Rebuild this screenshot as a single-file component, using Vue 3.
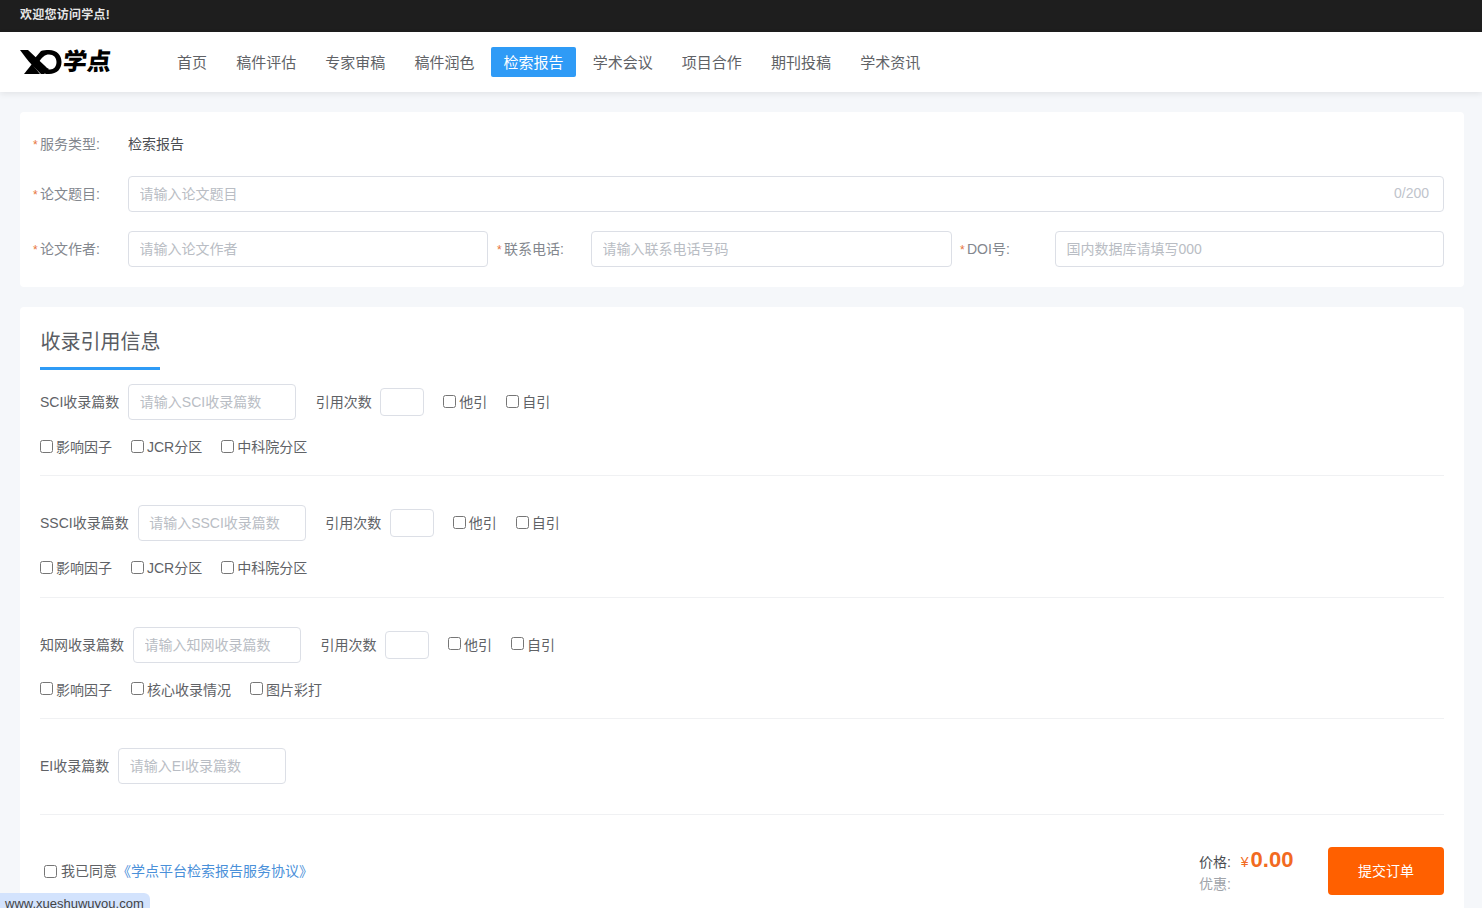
<script setup>
const navItems = ['首页', '稿件评估', '专家审稿', '稿件润色', '检索报告', '学术会议', '项目合作', '期刊投稿', '学术资讯']

const sections = [
  { name: 'SCI', cite: true, checks: ['影响因子', 'JCR分区', '中科院分区'] },
  { name: 'SSCI', cite: true, checks: ['影响因子', 'JCR分区', '中科院分区'] },
  { name: '知网', cite: true, checks: ['影响因子', '核心收录情况', '图片彩打'] },
  { name: 'EI', cite: false, checks: [] }
]
</script>

<template>
  <div class="page">
    <div class="topbar">欢迎您访问学点!</div>

    <header class="nav">
      <div class="logo">
        <svg class="logo-mark" viewBox="0 0 42 24" width="42" height="24">
          <path d="M0 0H8L24 15C26 17 27 18 29 19L24 24H21L12 15C8 11 4 5 0 0Z" fill="#000" />
          <path d="M4 24L12 14L20 24Z" fill="#000" />
          <path d="M15 8L21 1C23 0 26 0 29 0C37 0 41.500 5 41.500 12C41.500 19 37 24 29 24C27 24 25 24 24 23L27 19C28 19.500 29 19.500 30 19.500C34 19.500 36.500 16.500 36.500 12C36.500 7.500 33.500 4.500 29 4.500C25 4.500 22 7 19 12Z" fill="#000" />
        </svg>
        <span class="logo-text">学点</span>
      </div>
      <nav class="menu">
        <a v-for="item in navItems" :key="item" class="menu-item" :class="{ active: item === '检索报告' }">{{ item }}</a>
      </nav>
    </header>

    <main class="content">
      <section class="card base-card">
        <div class="form-row">
          <label class="field-label"><i>*</i>服务类型:</label>
          <span class="service">检索报告</span>
        </div>
        <div class="form-row title-row">
          <label class="field-label"><i>*</i>论文题目:</label>
          <div class="title-input">
            <input class="input" placeholder="请输入论文题目" />
            <span class="count">0/200</span>
          </div>
        </div>
        <div class="form-row triple">
          <div class="field">
            <label class="field-label"><i>*</i>论文作者:</label>
            <input class="input" placeholder="请输入论文作者" />
          </div>
          <div class="field">
            <label class="field-label"><i>*</i>联系电话:</label>
            <input class="input" placeholder="请输入联系电话号码" />
          </div>
          <div class="field">
            <label class="field-label"><i>*</i>DOI号:</label>
            <input class="input" placeholder="国内数据库请填写000" />
          </div>
        </div>
      </section>

      <section class="card cite-card">
        <h2 class="cite-title">收录引用信息</h2>

        <div v-for="s in sections" :key="s.name" class="cite-block" :class="{ short: !s.cite }">
          <div class="cite-row">
            <span class="cite-label">{{ s.name }}收录篇数</span>
            <input class="input count-input" :placeholder="`请输入${s.name}收录篇数`" />
            <template v-if="s.cite">
              <span class="cite-times">引用次数</span>
              <input class="input times-input" />
              <label class="check first-check"><input type="checkbox" />他引</label>
              <label class="check"><input type="checkbox" />自引</label>
            </template>
          </div>
          <div v-if="s.checks.length" class="check-row">
            <label v-for="c in s.checks" :key="c" class="check"><input type="checkbox" />{{ c }}</label>
          </div>
        </div>

        <div class="footer">
          <label class="agree">
            <input type="checkbox" /><span class="agree-text">我已同意<a class="agree-link">《学点平台检索报告服务协议》</a></span>
          </label>
          <div class="price">
            <div class="price-line">价格: <span class="yen">¥</span><b>0.00</b></div>
            <div class="discount">优惠:</div>
          </div>
          <button class="submit">提交订单</button>
        </div>
      </section>
    </main>

    <div class="status">www.xueshuwuyou.com</div>
  </div>
</template>

<style>
html, body {
  margin: 0;
  overflow: hidden;
}
</style>

<style scoped>
.page {
  height: 908px;
  overflow: hidden;
  position: relative;
  background: #f5f7fa;
  font-family: "Liberation Sans", "Noto Sans CJK SC", sans-serif;
  font-size: 14px;
  color: #606266;
}

.topbar {
  height: 32px;
  line-height: 30px;
  padding-left: 20px;
  background: #1e1e1e;
  color: #e6e6e6;
  font-size: 12px;
  font-weight: 700;
  letter-spacing: 0.25px;
}

.nav {
  height: 60px;
  display: flex;
  align-items: center;
  padding-left: 20px;
  background: #fff;
  box-shadow: 0 2px 6px rgba(0, 0, 0, 0.08);
  position: relative;
}

.logo {
  width: 144.500px;
  flex: none;
  display: flex;
  align-items: center;
}

.logo-mark {
  flex: none;
}

.logo-text {
  margin-left: 1px;
  font-size: 24px;
  font-weight: 900;
  line-height: 30px;
  color: #000;
  transform: skewX(-6deg);
}

.menu {
  display: flex;
  gap: 4.125px;
}

.menu-item {
  height: 30px;
  line-height: 32px;
  padding: 0 12.500px;
  border-radius: 2px;
  color: #606266;
  font-size: 15px;
  white-space: nowrap;
}

.menu-item.active {
  background: #2f9bf6;
  color: #fff;
}

.content {
  padding: 20px 18px 20px 20px;
  display: flex;
  flex-direction: column;
  gap: 20px;
}

.card {
  background: #fff;
  border-radius: 4px;
}

.base-card {
  height: 175px;
  box-sizing: border-box;
  padding: 14px 20px 20px 12px;
}

.form-row {
  display: flex;
  align-items: center;
  height: 36px;
}

.title-row {
  margin-top: 14px;
}

.triple {
  margin-top: 19px;
  display: grid;
  grid-template-columns: 457px 456px 1fr;
  column-gap: 7px;
}

.field {
  display: flex;
  align-items: center;
}

.field:first-child {
  padding-right: 1px;
}

.field:nth-child(2) .field-label {
  width: 95px;
}

.field-label {
  flex: none;
  width: 96px;
  padding-bottom: 2px;
  color: #83878e;
  white-space: nowrap;
}

.field-label i {
  display: inline-block;
  width: 7px;
  margin-left: 1px;
  color: #e8743b;
  font-style: normal;
  font-size: 12px;
}

.service {
  padding-bottom: 2px;
  color: #4a4d52;
}

.title-input {
  flex: 1;
  position: relative;
  display: flex;
}

.count {
  position: absolute;
  right: 15px;
  top: 9px;
  color: #c0c4cc;
}

.input {
  display: block;
  width: 100%;
  height: 36px;
  box-sizing: border-box;
  padding: 0 10.500px;
  border: 1px solid #dcdfe6;
  border-radius: 4px;
  outline: none;
  background: #fff;
  font: inherit;
  color: #606266;
}

.input::placeholder {
  color: #b9bdc4;
}

.cite-card {
  height: 640px;
  box-sizing: border-box;
  padding: 0 20px;
}

.cite-title {
  width: 120px;
  height: 63px;
  margin: 0 0 14px;
  box-sizing: border-box;
  padding: 21px 0 0 0.500px;
  border-bottom: 3px solid #2f9bf6;
  font-size: 20px;
  font-weight: 400;
  line-height: 28px;
  color: #5a5d63;
  white-space: nowrap;
}

.cite-block {
  height: 92.400px;
  box-sizing: border-box;
  margin-bottom: 29px;
  border-bottom: 1px solid #f0f1f3;
}

.cite-block.short {
  height: 67px;
  margin-bottom: 32px;
}

.cite-row {
  display: flex;
  align-items: center;
  height: 36px;
}

.cite-label {
  margin-right: 9px;
  padding-bottom: 2px;
  white-space: nowrap;
}

.count-input {
  flex: none;
  width: 168px;
}

.cite-times {
  margin-left: 19.500px;
  margin-right: 8.500px;
  padding-bottom: 2px;
  white-space: nowrap;
}

.times-input {
  flex: none;
  width: 44px;
  height: 28px;
}

.check {
  display: inline-flex;
  align-items: center;
  padding-bottom: 2px;
  white-space: nowrap;
}

.check input {
  width: 13px;
  height: 13px;
  margin: 0 3px 0 0;
}

.first-check {
  margin-left: 19px;
  margin-right: 19px;
}

.check-row {
  display: flex;
  gap: 19px;
  margin-top: 16px;
  height: 22px;
  align-items: center;
}

.footer {
  display: flex;
  align-items: center;
  height: 48px;
}

.agree {
  display: flex;
  align-items: center;
  margin-left: 4px;
  color: #606266;
  white-space: pre;
}

.agree input {
  width: 13px;
  height: 13px;
  margin: 0 4px 0 0;
}

.agree-text {
  padding-bottom: 2px;
}

.agree-link {
  color: #4a90d9;
}

.price {
  margin-left: auto;
  width: 129px;
  padding-top: 2px;
  line-height: 22px;
}

.price-line {
  color: #4a4d52;
  display: flex;
  align-items: baseline;
  white-space: pre;
}

.yen {
  color: #f26a21;
  font-size: 14px;
  margin-left: 6px;
}

.price-line b {
  color: #f26a21;
  font-size: 22px;
  margin-left: 2px;
}

.discount {
  color: #a0a4aa;
}

.submit {
  width: 116px;
  height: 48px;
  padding-bottom: 4px;
  border: 0;
  border-radius: 4px;
  background: #ff6000;
  color: #fff;
  font: inherit;
}

.status {
  position: absolute;
  left: 0;
  bottom: -6px;
  height: 21px;
  line-height: 21px;
  padding: 0 6px 0 5px;
  background: #d3e3fd;
  border-top-right-radius: 6px;
  font-size: 13px;
  color: #444;
}
</style>
